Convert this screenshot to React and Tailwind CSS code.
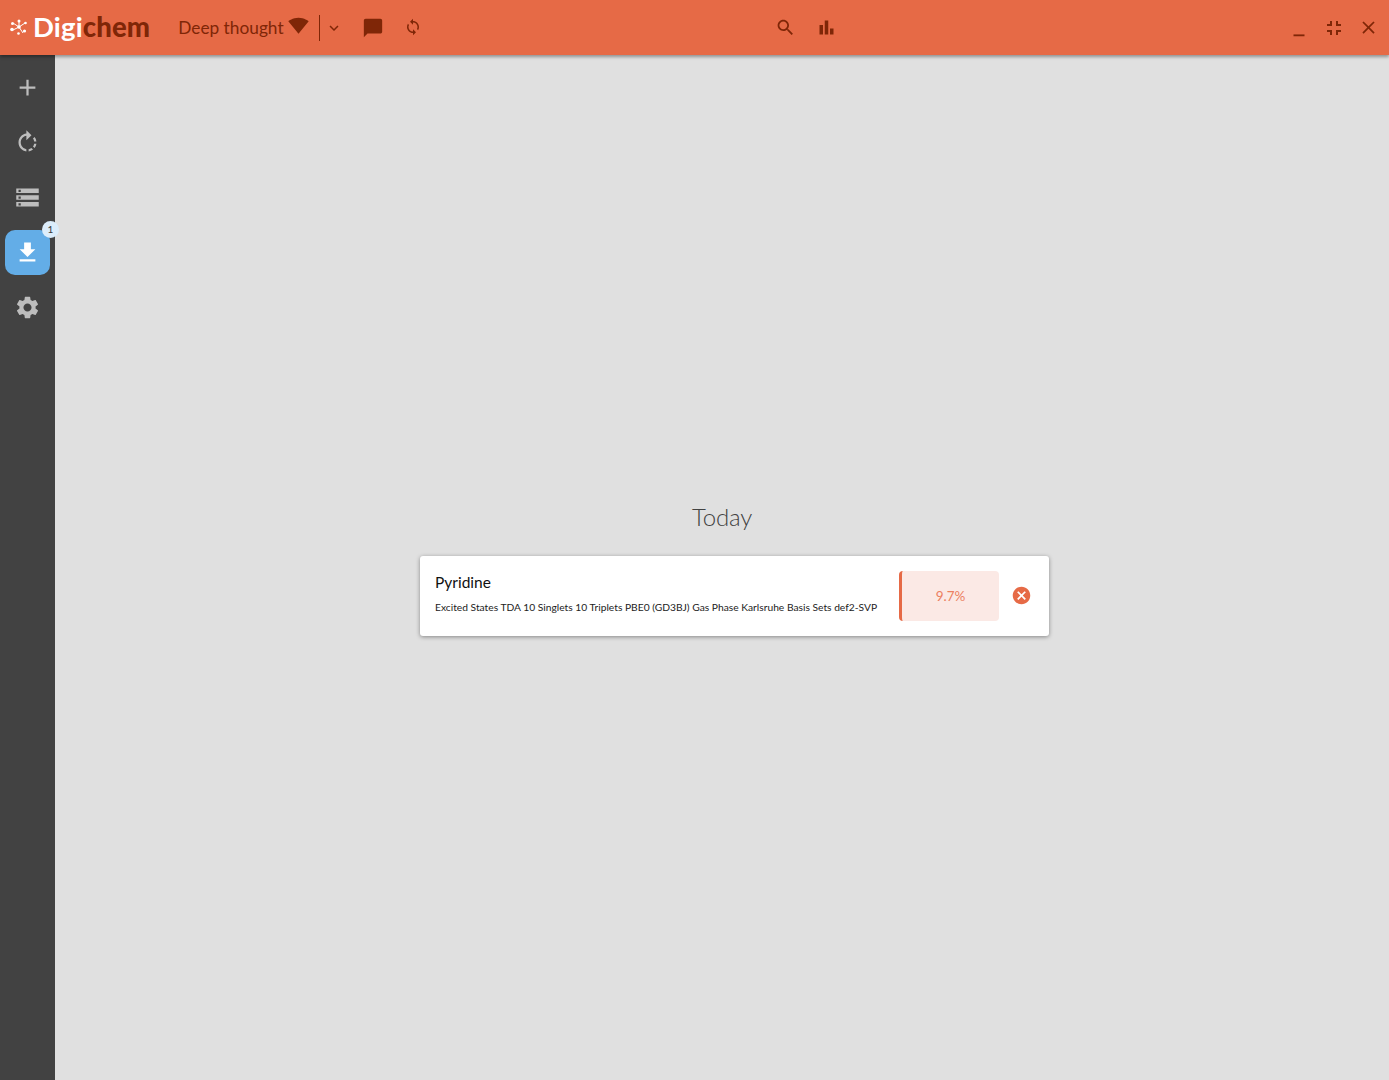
const P = {
  add: "M19 13h-6v6h-2v-6H5v-2h6V5h2v6h6v2z",
  rotate: "M15.55 5.55L11 1v3.07C7.06 4.56 4 7.92 4 12s3.05 7.44 7 7.93v-2.02c-2.84-.48-5-2.94-5-5.91s2.16-5.43 5-5.91V10l4.55-4.45zM19.93 11c-.17-1.39-.72-2.73-1.62-3.89l-1.42 1.42c.54.75.88 1.6 1.02 2.47h2.02zM13 17.9v2.02c1.39-.17 2.74-.71 3.9-1.61l-1.44-1.44c-.75.54-1.59.89-2.46 1.03zm3.89-2.42l1.42 1.41c.9-1.16 1.45-2.5 1.62-3.89h-2.02c-.14.87-.48 1.72-1.02 2.48z",
  storage: "M2 20h20v-4H2v4zm2-3h2v2H4v-2zM2 4v4h20V4H2zm4 3H4V5h2v2zm-4 7h20v-4H2v4zm2-3h2v2H4v-2z",
  download: "M19 9h-4V3H9v6H5l7 7 7-7zM5 18v2h14v-2H5z",
  settings: "M19.14 12.94c.04-.3.06-.61.06-.94 0-.32-.02-.64-.07-.94l2.03-1.58c.18-.14.23-.41.12-.61l-1.92-3.32c-.12-.22-.37-.29-.59-.22l-2.39.96c-.5-.38-1.03-.7-1.62-.94l-.36-2.54c-.04-.24-.24-.41-.48-.41h-3.84c-.24 0-.43.17-.47.41l-.36 2.54c-.59.24-1.13.57-1.62.94l-2.39-.96c-.22-.08-.47 0-.59.22L2.74 8.87c-.12.21-.08.47.12.61l2.03 1.58c-.05.3-.09.63-.09.94s.02.64.07.94l-2.03 1.58c-.18.14-.23.41-.12.61l1.92 3.32c.12.22.37.29.59.22l2.39-.96c.5.38 1.03.7 1.62.94l.36 2.54c.05.24.24.41.48.41h3.84c.24 0 .44-.17.47-.41l.36-2.54c.59-.24 1.13-.56 1.62-.94l2.39.96c.22.08.47 0 .59-.22l1.92-3.32c.12-.22.07-.47-.12-.61l-2.01-1.58zM12 15.6c-1.98 0-3.6-1.62-3.6-3.6s1.62-3.6 3.6-3.6 3.6 1.62 3.6 3.6-1.62 3.6-3.6 3.6z",
  chat: "M20 2H4c-1.1 0-2 .9-2 2v18l4-4h14c1.1 0 2-.9 2-2V4c0-1.1-.9-2-2-2z",
  sync: "M12 4V1L8 5l4 4V6c3.31 0 6 2.69 6 6 0 1.01-.25 1.97-.7 2.8l1.46 1.46C19.54 15.03 20 13.57 20 12c0-4.42-3.58-8-8-8zm0 14c-3.31 0-6-2.69-6-6 0-1.01.25-1.97.7-2.8L5.24 7.74C4.46 8.97 4 10.43 4 12c0 4.42 3.58 8 8 8v3l4-4-4-4v3z",
  search: "M15.5 14h-.79l-.28-.27C15.41 12.59 16 11.11 16 9.5 16 5.91 13.09 3 9.5 3S3 5.91 3 9.5 5.91 16 9.5 16c1.61 0 3.09-.59 4.23-1.57l.27.28v.79l5 4.99L20.49 19l-4.99-5zm-6 0C7.01 14 5 11.99 5 9.5S7.01 5 9.5 5 14 7.01 14 9.5 11.99 14 9.5 14z",
  bar: "M4 9h4v11H4zm12 4h4v7h-4zm-6-9h4v16h-4z",
  wifi: "M12.01 21.49L23.64 7c-.45-.34-4.93-4-11.64-4C5.28 3 .81 6.66.36 7l11.64 14.5.01-.01z",
  down: "M7.41 8.59L12 13.17l4.59-4.58L18 10l-6 6-6-6 1.41-1.41z",
  min: "M6 19h12v2H6z",
  exit: "M5 16h3v3h2v-5H5v2zm3-8H5v2h5V5H8v3zm6 11h2v-3h3v-2h-5v5zm2-11V5h-2v5h5V8h-3z",
  close: "M19 6.41L17.59 5 12 10.59 6.41 5 5 6.41 10.59 12 5 17.59 6.41 19 12 13.41 17.59 19 19 17.59 13.41 12 19 6.41z",
  cancel: "M12 2C6.47 2 2 6.47 2 12s4.47 10 10 10 10-4.47 10-10S17.53 2 12 2zm5 13.59L15.59 17 12 13.41 8.41 17 7 15.59 10.59 12 7 8.41 8.41 7 12 10.59 15.59 7 17 8.41 13.41 12 17 15.59z",
};

function Icon({ d, className }) {
  return (
    <svg viewBox="0 0 24 24" fill="currentColor" className={`shrink-0 ${className}`}>
      <path d={d} />
    </svg>
  );
}

function Logo() {
  return (
    <svg viewBox="0 0 18 18" className="w-[18px] h-[18px] shrink-0" fill="white" stroke="white">
      <g strokeWidth="1">
        <line x1="9" y1="9" x2="9" y2="3" />
        <line x1="9" y1="9" x2="3" y2="5" />
        <line x1="9" y1="9" x2="15" y2="5" />
        <line x1="9" y1="9" x2="3" y2="12" />
        <line x1="9" y1="9" x2="13" y2="15" />
      </g>
      <g stroke="none">
        <circle cx="9" cy="9" r="1.8" />
        <circle cx="9" cy="3" r="1.5" />
        <circle cx="2.5" cy="5.5" r="1.5" />
        <circle cx="15.5" cy="5" r="1.3" />
        <circle cx="2" cy="11.5" r="1.8" />
        <circle cx="8.5" cy="15.5" r="1.3" />
        <circle cx="14.5" cy="13" r="1.6" />
      </g>
    </svg>
  );
}

function SideItem({ d, active, badge }) {
  return (
    <div className={`relative w-[45px] h-[45px] rounded-[10px] flex items-center justify-center ${active ? "bg-[#63ade7] text-white" : "text-[#bdbdbd]"}`}>
      <Icon d={d} className="w-[27px] h-[27px]" />
      {badge && (
        <span className="absolute -top-[9px] -right-[9px] w-[17px] h-[17px] rounded-full bg-[#dcedfb] text-[#3a3a3a] text-[10px] leading-[17px] text-center">
          {badge}
        </span>
      )}
    </div>
  );
}

export default function App() {
  return (
    <div className="h-screen w-full flex flex-col overflow-hidden bg-[#e0e0e0] font-['Lato',sans-serif]">
      <header className="relative z-10 h-[55px] shrink-0 bg-[#e66a46] shadow-[0_2px_3px_rgba(0,0,0,0.35)] flex items-center text-[#7f2607]">
        <div className="flex items-center ml-[10px] -mt-[2px]">
          <Logo />
          <span className="ml-[5px] text-[27.5px] leading-none font-bold tracking-[0.15px] text-white">
            Digi<span className="font-black text-[#7f2607]">chem</span>
          </span>
        </div>
        <span className="ml-[28px] text-[17.3px] leading-none">Deep thought</span>
        <Icon d={P.wifi} className="ml-[4px] -mt-[5px] w-[21px] h-[21px]" />
        <div className="ml-[10px] w-px h-[26px] bg-[#7f2607]" />
        <Icon d={P.down} className="ml-[5px] w-[18px] h-[18px]" />
        <Icon d={P.chat} className="ml-[19px] w-[22px] h-[22px]" />
        <Icon d={P.sync} className="ml-[20px] -mt-px w-[18px] h-[18px]" />
        <Icon d={P.search} className="ml-[353px] w-[21px] h-[21px]" />
        <Icon d={P.bar} className="ml-[20px] w-[21px] h-[21px]" />
        <div className="ml-auto flex items-center mr-[10px] gap-3">
          <Icon d={P.min} className="w-[22px] h-[22px]" />
          <Icon d={P.exit} className="w-6 h-6" />
          <Icon d={P.close} className="w-[21px] h-[21px]" />
        </div>
      </header>
      <div className="flex-1 flex min-h-0">
        <aside className="w-[55px] shrink-0 bg-[#424242] flex flex-col items-center pt-[10px] gap-[10px]">
          <SideItem d={P.add} />
          <SideItem d={P.rotate} />
          <SideItem d={P.storage} />
          <SideItem d={P.download} active badge="1" />
          <SideItem d={P.settings} />
        </aside>
        <main className="flex-1 flex flex-col justify-center pt-[3px]">
          <h2 className="text-center text-[24px] leading-[30px] font-light tracking-[-0.2px] text-[#424242]">Today</h2>
          <div className="mt-[24px] ml-[365px] w-[629px] h-[80px] bg-white rounded-[3px] shadow-[0_1px_4px_rgba(0,0,0,0.4)] flex items-center">
            <div className="ml-[15px] w-[464px] shrink-0 -mt-[8px]">
              <div className="text-[15.5px] leading-[22px] text-[#111]">Pyridine</div>
              <div className="mt-[7px] text-[10.25px] leading-[14px] whitespace-nowrap text-[#222]">
                Excited States TDA 10 Singlets 10 Triplets PBE0 (GD3BJ) Gas Phase Karlsruhe Basis Sets def2-SVP
              </div>
            </div>
            <div className="w-[100px] h-[50px] shrink-0 rounded-[4px] border-l-[3px] border-[#e66a46] bg-[#fbe9e5] flex items-center justify-center text-[13.5px] text-[#ec7f60]">
              9.7%
            </div>
            <Icon d={P.cancel} className="ml-[12px] -mt-[2px] w-[21px] h-[21px] text-[#e66a46]" />
          </div>
        </main>
      </div>
    </div>
  );
}
